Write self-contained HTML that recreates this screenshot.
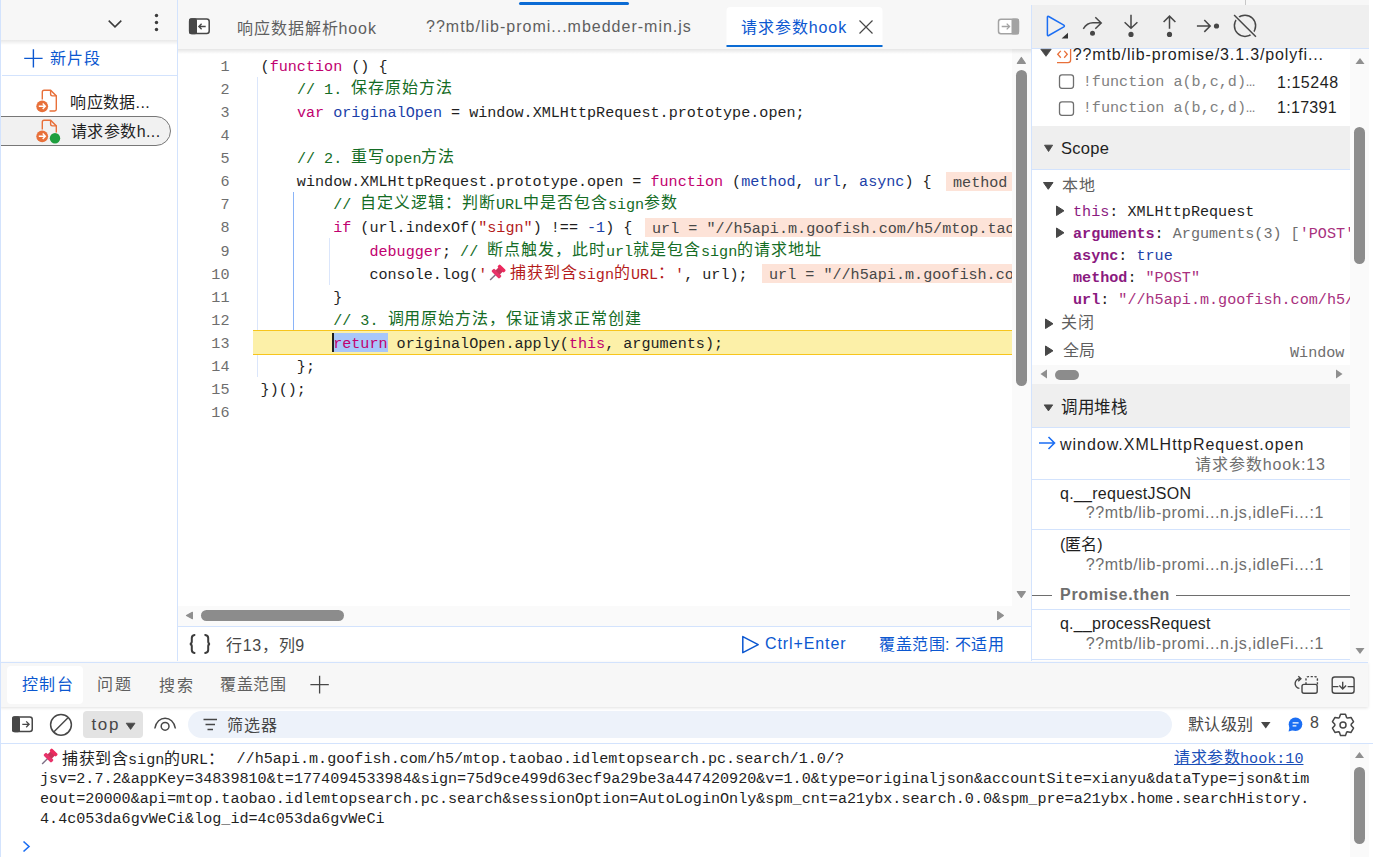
<!DOCTYPE html>
<html lang="zh-CN"><head><meta charset="utf-8">
<style>
*{box-sizing:border-box;margin:0;padding:0}
html,body{width:1373px;height:857px;overflow:hidden;background:#fff;font-family:"Liberation Sans",sans-serif;font-size:16px;color:#1f1f1f}
.a{position:absolute;white-space:pre}
.mono{font-family:"Liberation Mono",monospace}
svg{position:absolute;overflow:visible}
/* panels */
#side{position:absolute;left:0;top:0;width:178px;height:662px;background:#fff;border-left:2px solid #fff;border-right:1px solid #d3e3fd}
#sidehead{position:absolute;left:-2px;top:0;width:177px;height:40px;background:#f7f7f7}
#sidehead:after{content:"";position:absolute;left:0;top:40px;width:177px;height:5px;background:linear-gradient(rgba(0,0,0,.09),rgba(0,0,0,0))}
#tabs{position:absolute;z-index:2;left:178px;top:0;width:853px;height:49px;background:#f7f7f7}
#tabs:after{content:"";position:absolute;left:0;top:49px;width:853px;height:5px;background:linear-gradient(rgba(0,0,0,.10),rgba(0,0,0,0))}
#editor{position:absolute;left:178px;top:48px;width:853px;height:578px;background:#fff}
#status{position:absolute;left:178px;top:626px;width:853px;height:36px;background:#fff;border-top:1px solid #d3e3fd}
#dbg{position:absolute;left:1031px;top:0;width:342px;height:662px;background:#fff}
.hdr{position:absolute;left:0;width:319px;height:43px;background:#efefef;border-bottom:1px solid #d3e3fd}
.sc{left:42px;font-size:15.12px;color:#1f1f1f}
.pn{color:#8b1a80}
.ps{color:#a8307e}
.fb{position:absolute;left:0;width:319px;height:1px;background:#d3e3fd}
#drawer{position:absolute;left:0;top:661px;width:1373px;height:196px;background:#fff}
#code{position:absolute;z-index:1;left:0;top:7.5px;width:834px;font-family:"Liberation Mono",monospace;font-size:15.12px;color:#1f1f1f}
.ln{position:relative;height:23.125px;line-height:23.125px;white-space:pre}
.num{position:absolute;right:782.5px;color:#6e6e6e;text-align:right}
.code{position:absolute;left:82.6px}
.k{color:#c1016f}.d{color:#1c3fa8}.c{color:#146c25}.s{color:#b41b1b}.n{color:#1c3fa8}
.cj{font-size:16px;letter-spacing:0.95px;position:relative;top:-1px}
.pin{display:inline-block;width:22.6px;height:15px;vertical-align:-2px;position:relative}
.ret{position:relative}
.ret:after{content:"";position:absolute;left:0;right:0;top:-2px;height:19px;background:#a8c7fa;z-index:-1}
.ret:before{content:"";position:absolute;left:-1px;top:-2px;width:1.6px;height:19px;background:#1f1f1f}
#hl{position:absolute;left:75px;top:282px;width:759px;height:25px;background:#fcf0a8;border-top:1px solid #f7c51c;border-bottom:1px solid #f7c51c}
.guide{position:absolute;width:1px;background:#dbe6fb}
.iv{position:absolute;height:19px;line-height:23px;background:#fde3d8;color:#474747;font-family:"Liberation Mono",monospace;font-size:15.12px;padding-left:7px;white-space:pre;overflow:hidden}
#vsb{position:absolute;left:834px;top:0;width:19px;height:558px;background:#fafafa}
#vthumb{position:absolute;left:838px;top:22px;width:11px;height:316px;border-radius:6px;background:#8c8c8c}
#hsb{position:absolute;left:0;top:558px;width:853px;height:20px;background:#fafafa}
#hthumb{position:absolute;left:22.5px;top:562px;width:143px;height:11px;border-radius:6px;background:#8c8c8c}
.cl{position:absolute;left:40px;white-space:pre;font-family:"Liberation Mono",monospace;font-size:15.12px;line-height:20px;color:#1f1f1f}
.cj2{font-size:16px;letter-spacing:0.5px}
.pin2{display:inline-block;width:23px;height:15px}
</style></head><body>

<div id="side">
  <div id="sidehead"></div>
  <div style="position:absolute;left:-2px;top:0;width:1.3px;height:662px;background:#d3e3fd;z-index:3"></div>
  <svg style="left:-2px;top:0" width="178" height="160">
    <path d="M108.7 20.6 L115 26.9 L121.3 20.6" fill="none" stroke="#3c3c3c" stroke-width="1.5"/>
    <circle cx="156.5" cy="15.5" r="1.7" fill="#3c3c3c"/><circle cx="156.5" cy="22.5" r="1.7" fill="#3c3c3c"/><circle cx="156.5" cy="29.5" r="1.7" fill="#3c3c3c"/>
    <path d="M33.4 49.2 V67.6 M24.2 58.4 H42.6" stroke="#0b57d0" stroke-width="1.4"/>
  </svg>
  <div id="t1" class="a" style="left:48.10px;top:44.55px;font-size:16px;color:#0b57d0;letter-spacing:1.00px">新片段</div>
  <div style="position:absolute;left:0;top:75px;width:176px;height:1px;background:#d3e3fd"></div>
  <div style="position:absolute;left:-6px;top:116px;width:175px;height:30px;border:1.2px solid #777;border-radius:0 15px 15px 0;background:#f1f1f1"></div>
  <svg style="left:-2px;top:80px" width="178" height="80">
    <g fill="none" stroke="#e8703a" stroke-width="1.4">
      <path d="M42.3 19.5 V12 Q42.3 10.2 44.1 10.2 H50.6 L56.3 15.9 V29.3 Q56.3 31 54.6 31 H49.5"/>
      <path d="M50.6 10.2 V14.1 Q50.6 15.9 52.4 15.9 H56.3"/>
    </g>
    <circle cx="42.2" cy="26.3" r="5.9" fill="#e8703a"/>
    <path d="M38.8 26.3 H45 M42.7 23.6 L45.3 26.3 L42.7 29" fill="none" stroke="#fff" stroke-width="1.4"/>
    <g transform="translate(0,30)">
    <g fill="none" stroke="#e8703a" stroke-width="1.4">
      <path d="M42.3 19.5 V12 Q42.3 10.2 44.1 10.2 H50.6 L56.3 15.9 V22.5"/>
      <path d="M50.6 10.2 V14.1 Q50.6 15.9 52.4 15.9 H56.3"/>
    </g>
    <circle cx="42.2" cy="26.3" r="5.9" fill="#e8703a"/>
    <path d="M38.8 26.3 H45 M42.7 23.6 L45.3 26.3 L42.7 29" fill="none" stroke="#fff" stroke-width="1.4"/>
    <circle cx="55" cy="28.3" r="5.2" fill="#1e9e3e"/>
    </g>
  </svg>
  <div id="t2" class="a" style="left:68.30px;top:88.80px;font-size:16px;color:#1f1f1f;letter-spacing:0.33px">响应数据...</div>
  <div id="t3" class="a" style="left:69px;top:118.10px;font-size:16px;color:#1f1f1f;letter-spacing:0.41px">请求参数h...</div>
</div>
<div id="tabs">
  <svg style="left:0;top:0" width="853" height="48">
    <rect x="11.6" y="19" width="19.6" height="14.6" rx="2.5" fill="#fff" stroke="#474747" stroke-width="1.5"/>
    <rect x="11" y="18.3" width="8" height="16" rx="2" fill="#474747"/>
    <path d="M20.8 26.5 H27.7 M23.6 23.7 L20.8 26.5 L23.6 29.3" fill="none" stroke="#474747" stroke-width="1.3"/>
    <rect x="341" y="2" width="110" height="3" rx="1.5" fill="#0b6bd4"/>
    <rect x="548.5" y="7" width="156" height="40" rx="4" fill="#fff"/>
    <rect x="548.5" y="45" width="156" height="2" fill="#0b6bd4"/>
    <path d="M681.5 20.5 L694.5 33.5 M694.5 20.5 L681.5 33.5" stroke="#474747" stroke-width="1.2"/>
    <rect x="820.5" y="19.2" width="20" height="14.6" rx="2.5" fill="#fff" stroke="#a3a3a3" stroke-width="1.5"/>
    <rect x="833.5" y="18.5" width="7.5" height="16" rx="1.5" fill="#a3a3a3"/>
    <path d="M823.7 26.5 H831.5 M828.7 23.6 L831.6 26.5 L828.7 29.4" fill="none" stroke="#a3a3a3" stroke-width="1.3"/>
  </svg>
  <div id="t4" class="a" style="left:59.00px;top:14.50px;color:#5f5f5f;letter-spacing:0.91px">响应数据解析hook</div>
  <div id="t5" class="a" style="left:248px;top:18.20px;color:#5f5f5f;letter-spacing:1.00px">??mtb/lib-promi...mbedder-min.js</div>
  <div id="t6" class="a" style="left:563px;top:14.35px;color:#0b57d0;letter-spacing:0.92px">请求参数hook</div>
</div>
<div id="editor">
  <div class="guide" style="left:79px;top:29px;height:300px"></div>
  <div class="guide" style="left:115px;top:144px;height:138px;background:#8ab4f8"></div>
  <div class="guide" style="left:151px;top:190px;height:47px"></div>
  <div id="hl"></div>
  <div id="code"><div class="ln"><span class="num">1</span><span class="code">(<span class="k">function</span> () {</span></div><div class="ln"><span class="num">2</span><span class="code">    <span class="c">// 1. <span class="cj">保存原始方法</span></span></span></div><div class="ln"><span class="num">3</span><span class="code">    <span class="k">var</span> <span class="d">originalOpen</span> = window.XMLHttpRequest.prototype.open;</span></div><div class="ln"><span class="num">4</span><span class="code"></span></div><div class="ln"><span class="num">5</span><span class="code">    <span class="c">// 2. <span class="cj">重写</span>open<span class="cj">方法</span></span></span></div><div class="ln"><span class="num">6</span><span class="code">    window.XMLHttpRequest.prototype.open = <span class="k">function</span> (<span class="d">method</span>, <span class="d">url</span>, <span class="d">async</span>) {</span></div><div class="ln"><span class="num">7</span><span class="code">        <span class="c">// <span class="cj">自定义逻辑：判断</span>URL<span class="cj">中是否包含</span>sign<span class="cj">参数</span></span></span></div><div class="ln"><span class="num">8</span><span class="code">        <span class="k">if</span> (url.indexOf(<span class="s">"sign"</span>) !== <span class="n">-1</span>) {</span></div><div class="ln"><span class="num">9</span><span class="code">            <span class="k">debugger</span>; <span class="c">// <span class="cj">断点触发，此时</span>url<span class="cj">就是包含</span>sign<span class="cj">的请求地址</span></span></span></div><div class="ln"><span class="num">10</span><span class="code">            console.log(<span class="s">'<span class=pin><svg width="22" height="22" style="left:2px;top:-5px"><g transform="translate(7.5,12.6) rotate(-45)"><line x1="-1.5" y1="0" x2="-9" y2="0" stroke="#7d6f85" stroke-width="1.4"/><rect x="-2" y="-5.5" width="4" height="11" rx="1.2" fill="#e8336a"/><rect x="1.5" y="-3" width="5" height="6" fill="#c9325a"/><rect x="5.5" y="-4.5" width="3.5" height="9" rx="1.2" fill="#ec2a5e"/></g></svg></span><span class="cj">捕获到含</span>sign<span class="cj">的</span>URL<span class="cj">：</span>'</span>, url);</span></div><div class="ln"><span class="num">11</span><span class="code">        }</span></div><div class="ln"><span class="num">12</span><span class="code">        <span class="c">// 3. <span class="cj">调用原始方法，保证请求正常创建</span></span></span></div><div class="ln"><span class="num">13</span><span class="code">        <span class="ret"><span class="k">return</span></span> originalOpen.apply(<span class="k">this</span>, arguments);</span></div><div class="ln"><span class="num">14</span><span class="code">    };</span></div><div class="ln"><span class="num">15</span><span class="code">})();</span></div><div class="ln"><span class="num">16</span><span class="code"></span></div></div>
  <div class="iv" style="left:768px;top:124px;width:66px">method</div>
  <div class="iv" style="left:467px;top:170px;width:367px">url = "//h5api.m.goofish.com/h5/mtop.tao</div>
  <div class="iv" style="left:584px;top:216px;width:250px">url = "//h5api.m.goofish.com/h5/mtop.tao</div>
  <div id="vsb"></div><div id="vthumb"></div>
  <div id="hsb"></div><div id="hthumb"></div>
  <svg style="left:0;top:0" width="853" height="578">
    <g fill="#8f8f8f" stroke="#8f8f8f" stroke-width="1.2" stroke-linejoin="round">
    <path d="M843.35 9.5 L847.3 15.4 H839.4 Z"/>
    <path d="M839.4 543.6 H847.3 L843.35 549.4 Z"/>
    <path d="M14.4 564.3 L8.5 567.5 L14.4 570.7 Z"/>
    <path d="M819.6 563.5 L825.4 567.5 L819.6 571.5 Z"/>
    </g>
  </svg>
</div>
<div id="status">
  
  <div id="t8" class="a" style="left:48px;top:5.35px;color:#474747;letter-spacing:0.70px">行13，列9</div>
  <svg style="left:0;top:0" width="853" height="36"><path d="M564.8 9.6 L580.2 17.6 L564.8 25.6 Z" fill="none" stroke="#0b57d0" stroke-width="1.5" stroke-linejoin="round"/>
  <g fill="none" stroke="#3c3c3c" stroke-width="2" stroke-linecap="round"><path d="M16.5 7.9 Q13.8 8.3 13.8 11 V14.5 Q13.8 16.6 11.9 16.9 Q13.8 17.2 13.8 19.3 V23 Q13.8 25.6 16.5 25.9"/><path d="M27.2 7.9 Q30.2 8.3 30.2 11 V14.5 Q30.2 16.6 31.9 16.9 Q30.2 17.2 30.2 19.3 V23 Q30.2 25.6 27.2 25.9"/></g></svg>
  <div id="t9" class="a" style="left:587.00px;top:8.00px;color:#0b57d0;letter-spacing:0.90px">Ctrl+Enter</div>
  <div id="t10" class="a" style="left:701.10px;top:3.60px;color:#0b57d0;letter-spacing:0.49px">覆盖范围: 不适用</div>
</div>
<div id="dbg">
  <div style="position:absolute;left:0;top:0;width:338px;height:5px;background:#f7f7f7"></div>
  <div style="position:absolute;left:214px;top:0;width:1px;height:5px;background:#c7c7c7"></div>
  <div style="position:absolute;left:0;top:5px;width:338px;height:44px;background:#efefef;border-bottom:1px solid #d3e3fd"></div>
  <svg style="left:0;top:0" width="342" height="48">
    <path d="M16.4 17.2 Q16.4 15.8 17.7 16.5 L32.8 25.1 Q34 26 32.8 26.9 L17.7 35.5 Q16.4 36.2 16.4 34.8 Z" fill="none" stroke="#1b6ef3" stroke-width="1.5" stroke-linejoin="round"/>
    <path d="M30.6 38.4 L37 32.8 V38.4 Z" fill="#333"/>
    <g fill="none" stroke="#474747" stroke-width="1.5">
      <path d="M52.3 28.8 Q56 22.8 62 22.8 H70.4 M64.3 17.2 L70.2 23 L64.3 28.7"/>
      <path d="M100 14.8 V28 M93.6 22.2 L100 28.3 L106.4 22.2"/>
      <path d="M138.5 28.8 V16.3 M132.6 22 L138.5 16.1 L144.4 22"/>
      <path d="M165.9 26 H179.2 M173.3 19.9 L179.2 26 L173.3 31.9"/>
      <circle cx="214" cy="25.8" r="10.6"/>
      <path d="M203.1 15 L224.9 36.8" stroke="#efefef" stroke-width="4.5"/>
      <path d="M203.1 15 L224.9 36.8"/>
    </g>
    <circle cx="61.5" cy="33.2" r="2.5" fill="#474747"/>
    <circle cx="100" cy="34.4" r="2.6" fill="#474747"/>
    <circle cx="138.5" cy="34.4" r="2.6" fill="#474747"/>
    <circle cx="185.5" cy="26" r="2.6" fill="#474747"/>
  </svg>
  <!-- breakpoints -->
  <svg style="left:0;top:48px" width="342" height="80">
    <path d="M9.8 1.3 H20.2 L15 8.3 Z" fill="#474747" stroke="#474747" stroke-width="0.8" stroke-linejoin="round"/>
    <path d="M29.8 2.9 L26.7 6.3 L29.8 9.8 M33.2 2.9 L36.3 6.3 L33.2 9.8" fill="none" stroke="#e8703a" stroke-width="1.3"/>
    <path d="M39.6 1 V12 Q39.6 14.6 37 14.6 H26" fill="none" stroke="#e8703a" stroke-width="1.3"/>
    <rect x="28.5" y="26.8" width="14" height="13.5" rx="2.5" fill="none" stroke="#6e6e6e" stroke-width="1.3"/>
    <rect x="28.5" y="53.8" width="14" height="13.5" rx="2.5" fill="none" stroke="#6e6e6e" stroke-width="1.3"/>
  </svg>
  <div id="t11" class="a" style="left:41.80px;top:45.75px;color:#1f1f1f;letter-spacing:0.87px">??mtb/lib-promise/3.1.3/polyfi...</div>
  <div id="t12" class="a mono" style="left:51.80px;top:72.90px;color:#7f7f7f;font-size:15.12px">!function a(b,c,d)…</div>
  <div id="t13" class="a mono" style="left:51.80px;top:98.95px;color:#7f7f7f;font-size:15.12px">!function a(b,c,d)…</div>
  <div id="t14" class="a" style="left:246px;top:73.70px;color:#1f1f1f;letter-spacing:0.54px">1:15248</div>
  <div id="t15" class="a" style="left:246px;top:99.40px;color:#1f1f1f;letter-spacing:0.30px">1:17391</div>
  <!-- scope -->
  <div class="hdr" style="top:126px;height:44px"></div>
  <svg style="left:0;top:126px" width="342" height="42"><path d="M13.5 19.2 H21.6 L17.55 25.5 Z" fill="#474747" stroke="#474747" stroke-width="0.9" stroke-linejoin="round"/></svg>
  <div id="t16" class="a" style="left:30px;top:138.90px;color:#1f1f1f;font-size:16.5px;letter-spacing:0.30px">Scope</div>
  <svg style="left:0;top:168px" width="342" height="200">
    <g fill="#474747" stroke="#474747" stroke-width="1" stroke-linejoin="round">
    <path d="M12.5 14.5 H22 L17.25 21.3 Z"/>
    <path d="M25.5 38 V47.5 L33 42.75 Z"/>
    <path d="M25.5 60 V69.5 L33 64.75 Z"/>
    <path d="M14.5 151 V160.5 L22 155.75 Z"/>
    <path d="M14.5 178 V187.5 L22 182.75 Z"/>
    </g>
  </svg>
  <div id="t17" class="a" style="left:31.10px;top:171.75px;color:#5f5f5f;letter-spacing:1.10px">本地</div>
  <div id="t18" class="a mono sc" style="top:202.8px"><span class="pn">this</span>: XMLHttpRequest</div>
  <div id="t19" class="a mono sc" style="top:224.8px"><b class="pn">arguments</b>: <span style="color:#6e6e6e">Arguments(3) [</span><span class="ps">'POST'</span></div>
  <div id="t20" class="a mono sc" style="top:246.8px;left:42px"><b class="pn">async</b>: <span style="color:#1c3fa8">true</span></div>
  <div id="t21" class="a mono sc" style="top:268.8px;left:42px"><b class="pn">method</b>: <span class="ps">"POST"</span></div>
  <div id="t22" class="a mono sc" style="top:290.8px;left:42px"><b class="pn">url</b>: <span class="ps">"//h5api.m.goofish.com/h5/</span></div>
  <div id="t23" class="a" style="left:30.20px;top:309.20px;color:#5f5f5f;letter-spacing:0.9px">关闭</div>
  <div id="t24" class="a" style="left:31.80px;top:337.25px;color:#5f5f5f;letter-spacing:0.60px">全局</div>
  <div id="t25" class="a mono" style="left:259px;top:343.75px;color:#6e6e6e;font-size:15.12px">Window</div>
  <div style="position:absolute;left:0;top:365px;width:319px;height:19px;background:#f9f9f9"></div>
  <div style="position:absolute;left:24px;top:369.5px;width:24px;height:10px;border-radius:5px;background:#8c8c8c"></div>
  <svg style="left:0;top:365px" width="342" height="20"><path d="M16 4.5 L9.5 9 L16 13.5 Z" fill="#8f8f8f"/><path d="M305 4.5 L311.5 9 L305 13.5 Z" fill="#8f8f8f"/></svg>
  <!-- call stack -->
  <div class="hdr" style="top:384px;height:44px"></div>
  <svg style="left:0;top:384px" width="342" height="44"><path d="M13.2 20.9 H21.7 L17.45 26.9 Z" fill="#474747" stroke="#474747" stroke-width="0.9" stroke-linejoin="round"/></svg>
  <div id="t26" class="a" style="left:30px;top:393.75px;color:#1f1f1f;font-size:16.5px;letter-spacing:-0.49px">调用堆栈</div>
  <svg style="left:0;top:428px" width="342" height="30"><path d="M8 15 H23 M17.5 9 L23.5 15 L17.5 21" fill="none" stroke="#1b6ef3" stroke-width="1.6"/></svg>
  <div id="t27" class="a" style="left:29px;top:436.10px;color:#1f1f1f;letter-spacing:0.98px">window.XMLHttpRequest.open</div>
  <div id="t28" class="a" style="left:164.40px;top:451.20px;color:#6e6e6e;letter-spacing:0.86px">请求参数hook:13</div>
  <div class="fb" style="top:478.5px"></div>
  <div id="t29" class="a" style="left:29px;top:485.20px;color:#1f1f1f;letter-spacing:0.28px">q.__requestJSON</div>
  <div id="t30" class="a" style="left:54.70px;top:503.85px;color:#6e6e6e;letter-spacing:0.60px">??mtb/lib-promi...n.js,idleFi...:1</div>
  <div class="fb" style="top:528.5px"></div>
  <div id="t31" class="a" style="left:29px;top:530.60px;color:#1f1f1f;letter-spacing:0.01px">(匿名)</div>
  <div id="t32" class="a" style="left:54.70px;top:556.00px;color:#6e6e6e;letter-spacing:0.60px">??mtb/lib-promi...n.js,idleFi...:1</div>
  <div style="position:absolute;left:1px;top:594.5px;width:20px;height:1px;background:#6e6e6e"></div>
  <div style="position:absolute;left:145px;top:594.5px;width:174px;height:1px;background:#6e6e6e"></div>
  <div id="t33" class="a" style="left:29px;top:585.80px;color:#6e6e6e;font-weight:bold;letter-spacing:0.72px">Promise.then</div>
  <div class="fb" style="top:609px"></div>
  <div id="t34" class="a" style="left:29px;top:615.40px;color:#1f1f1f;letter-spacing:0.22px">q.__processRequest</div>
  <div id="t35" class="a" style="left:54.70px;top:634.90px;color:#6e6e6e;letter-spacing:0.60px">??mtb/lib-promi...n.js,idleFi...:1</div>
  <div class="fb" style="top:659px"></div>
  <!-- right scrollbar -->
  <div style="position:absolute;left:319px;top:49px;width:19px;height:613px;background:#fafafa"></div>
  <div style="position:absolute;left:323px;top:127px;width:11px;height:137px;border-radius:5.5px;background:#8c8c8c"></div>
  <svg style="left:0;top:0" width="342" height="662"><path d="M324.5 64 L329 58 L333.5 64 Z" fill="#8f8f8f"/><path d="M324.5 648 H333.5 L329 654 Z" fill="#8f8f8f"/></svg>
  <div style="position:absolute;left:0;top:5px;width:1px;height:657px;background:#d3e3fd"></div>
</div>
<div id="drawer">
  <div style="position:absolute;left:0;top:1px;width:1368px;height:45px;background:#f7f7f7;border-top:1px solid #d3e3fd;box-shadow:0 1px 3px rgba(0,0,0,.12)"></div>
  <div style="position:absolute;left:6.8px;top:4.5px;width:76.5px;height:38.3px;background:#fff;border-radius:4px"></div>
  <div id="t36" class="a" style="left:21.50px;top:10.20px;color:#0b57d0;letter-spacing:1.60px">控制台</div>
  <div id="t37" class="a" style="left:97.00px;top:10.00px;color:#5f5f5f;letter-spacing:2.00px">问题</div>
  <div id="t38" class="a" style="left:159px;top:10.50px;color:#5f5f5f;letter-spacing:2.00px">搜索</div>
  <div id="t39" class="a" style="left:220.00px;top:10.00px;color:#5f5f5f;letter-spacing:0.68px">覆盖范围</div>
  <svg style="left:0;top:0" width="1373" height="196">
    <path d="M319.6 14.8 V32.4 M310.4 23.6 H328.8" stroke="#474747" stroke-width="1.3"/>
    <g fill="none" stroke="#474747" stroke-width="1.4">
      <path d="M1299.4 27.4 A4.7 4.7 0 1 1 1300.5 17.8"/>
      <path d="M1298.3 15.3 L1300.9 17.8 L1298.2 20.2"/>
      <path d="M1306 23.4 V18.1 Q1306 15.6 1308.5 15.6 H1314.9 Q1317.4 15.6 1317.4 18.1 V23.4" stroke-dasharray="2.2 1.6"/>
      <rect x="1302" y="23.4" width="15.2" height="8.8" rx="2"/>
      <rect x="1332.2" y="16" width="21.9" height="16.2" rx="2.5"/>
      <path d="M1332.2 25.6 H1338.4 M1347.6 25.6 H1354.1 M1342.7 20.8 V27.8 M1339.3 24.6 L1342.7 28 L1346.1 24.6"/>
    </g>
  </svg>
  <!-- toolbar -->
  <div style="position:absolute;left:83px;top:50.2px;width:59.5px;height:27.2px;background:#e3e3e3;border-radius:4px"></div>
  <div style="position:absolute;left:187.7px;top:50.2px;width:984px;height:27.2px;background:#edf2fa;border-radius:14px"></div>
  <div style="position:absolute;left:0;top:81.7px;width:1373px;height:1px;background:#d3e3fd"></div>
  <svg style="left:0;top:0" width="1373" height="196">
    <rect x="12.75" y="56" width="19.5" height="14.6" rx="2.5" fill="#fff" stroke="#474747" stroke-width="1.5"/>
    <rect x="12" y="55.3" width="8" height="16" rx="2" fill="#474747"/>
    <path d="M22.3 63.3 H29 M26.2 60.4 L29.1 63.3 L26.2 66.2" fill="none" stroke="#474747" stroke-width="1.3"/>
    <circle cx="61" cy="63.8" r="10.4" fill="none" stroke="#474747" stroke-width="1.5"/>
    <path d="M54 70.8 L68 56.8" stroke="#474747" stroke-width="1.5"/>
    <path d="M126.2 62.2 H135 L130.6 68.4 Z" fill="#474747" stroke="#474747" stroke-width="0.8" stroke-linejoin="round"/>
    <path d="M154.8 67.5 C157 53.8 173.2 53.8 175.4 67.5" fill="none" stroke="#474747" stroke-width="1.5"/>
    <circle cx="165.1" cy="65.3" r="3.9" fill="none" stroke="#474747" stroke-width="1.5"/>
    <path d="M203.5 58.5 H217 M205.5 63.5 H215 M207.5 68.5 H213" stroke="#474747" stroke-width="1.5"/>
    <path d="M1261 61 H1270.5 L1265.75 67.5 Z" fill="#474747"/>
    <circle cx="1295.5" cy="63.2" r="6.8" fill="#1b6ef3"/>
    <path d="M1288.6 70.6 L1290 63.5 L1295.5 68.5 Z" fill="#1b6ef3"/>
    <path d="M1292.6 61.8 H1298.6 M1292.6 64.8 H1296.4" stroke="#fff" stroke-width="1.2"/>
  </svg>
  <svg style="left:0;top:0" width="1373" height="196"><path d="M1346.59 56.53 L1345.47 53.18 L1340.53 53.18 L1339.41 56.53 L1338.41 57.10 L1334.96 56.40 L1332.48 60.68 L1334.82 63.33 L1334.82 64.47 L1332.48 67.12 L1334.96 71.40 L1338.41 70.70 L1339.41 71.27 L1340.53 74.62 L1345.47 74.62 L1346.59 71.27 L1347.59 70.70 L1351.04 71.40 L1353.52 67.12 L1351.18 64.47 L1351.18 63.33 L1353.52 60.68 L1351.04 56.40 L1347.59 57.10 Z" fill="none" stroke="#474747" stroke-width="1.5" stroke-linejoin="round"/><circle cx="1343.0" cy="63.9" r="3" fill="none" stroke="#474747" stroke-width="1.5"/></svg>
  <div id="t40" class="a" style="left:91.40px;top:54.00px;color:#474747;font-size:17px;letter-spacing:1.70px">top</div>
  <div id="t41" class="a" style="left:226.50px;top:51.30px;color:#474747;letter-spacing:1.00px">筛选器</div>
  <div id="t42" class="a" style="left:1188.00px;top:49.75px;color:#474747;letter-spacing:0.49px">默认级别</div>
  <div id="t43" class="a" style="left:1310.00px;top:53.40px;color:#474747">8</div>
  <!-- messages -->
  <div id="t44" class="cl" style="top:87.90px;left:39px"><span class=pin2 style="position:relative"><svg width="22" height="22" style="left:2px;top:-4px"><g transform="translate(7.5,12.6) rotate(-45)"><line x1="-1.5" y1="0" x2="-9" y2="0" stroke="#7d6f85" stroke-width="1.4"/><rect x="-2" y="-5.5" width="4" height="11" rx="1.2" fill="#e8336a"/><rect x="1.5" y="-3" width="5" height="6" fill="#c9325a"/><rect x="5.5" y="-4.5" width="3.5" height="9" rx="1.2" fill="#ec2a5e"/></g></svg></span><span class="cj2">捕获到含</span>sign<span class="cj2">的</span>URL<span class="cj2">：</span></div>
  <div id="t45" class="cl" style="top:88.4px;left:236.5px">//h5api.m.goofish.com/h5/mtop.taobao.idlemtopsearch.pc.search/1.0/?</div>
  <div id="t46" class="cl" style="top:108.4px">jsv=2.7.2&amp;appKey=34839810&amp;t=1774094533984&amp;sign=75d9ce499d63ecf9a29be3a447420920&amp;v=1.0&amp;type=originaljson&amp;accountSite=xianyu&amp;dataType=json&amp;tim</div>
  <div id="t47" class="cl" style="top:128.4px">eout=20000&amp;api=mtop.taobao.idlemtopsearch.pc.search&amp;sessionOption=AutoLoginOnly&amp;spm_cnt=a21ybx.search.0.0&amp;spm_pre=a21ybx.home.searchHistory.</div>
  <div id="t48" class="cl" style="top:148.4px">4.4c053da6gvWeCi&amp;log_id=4c053da6gvWeCi</div>
  <div id="t49" class="cl" style="top:88px;left:1174px;color:#1a4fb8;text-decoration:underline"><span class="cj2">请求参数</span>hook:10</div>
  <svg style="left:0;top:0" width="1373" height="196"><path d="M23.5 180.5 L29 185.5 L23.5 190.5" fill="none" stroke="#1b6ef3" stroke-width="1.6"/></svg>
  <div style="position:absolute;left:1350px;top:83px;width:19px;height:113px;background:#fafafa"></div>
  <div style="position:absolute;left:1354px;top:105.7px;width:11px;height:77.8px;border-radius:5.5px;background:#8c8c8c"></div>
  <svg style="left:0;top:0" width="1373" height="196"><path d="M1355 97 L1359.5 91 L1364 97 Z" fill="#8f8f8f"/></svg>
  <div style="position:absolute;left:0;top:0;width:1px;height:196px;background:#d3e3fd"></div>
</div>

</body></html>
